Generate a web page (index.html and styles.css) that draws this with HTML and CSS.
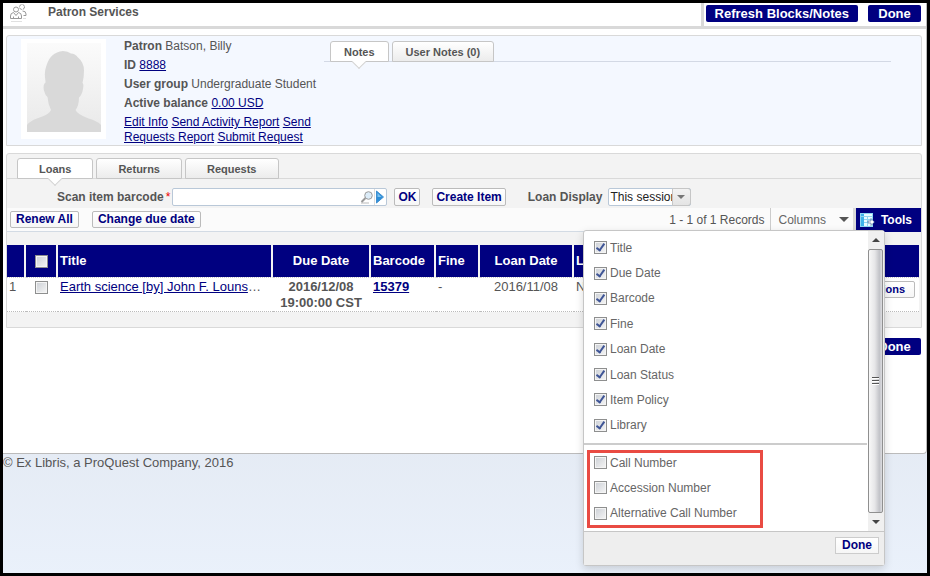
FILE: index.html
```html
<!DOCTYPE html>
<html lang="en">
<head>
    <meta charset="UTF-8">
    <meta name="viewport" content="width=device-width, initial-scale=1.0">
    <title>Patron Services</title>
    <link rel="stylesheet" href="styles.css">
</head>
<body>
    <main class="page">
        <header class="page-header">
            <svg class="header-icon" width="20" height="20" viewBox="0 0 20 20" fill="none" stroke="#999">
                <circle cx="13" cy="4" r="2.500" stroke-dasharray="3 1"/>
                <path d="M13.500 8q3.500 0 3.500 3v1.500h-2.500"/>
                <circle cx="7" cy="6.500" r="2.500" fill="#fff"/>
                <path fill="#fff" d="M1.500 15.500v-2.500q0-3 3-3.500l2.500 3 2.500-3q3 .5 3 3.500v2.500z"/>
                <path d="M4.500 15.500v-2M9.500 15.500v-2"/>
                <path d="M2 18.500h11M14 15.500h3" stroke="#e0e0e0"/>
            </svg>
            <h1>Patron Services</h1>
            <div class="header-actions">
                <button type="button" class="btn-primary">Refresh Blocks/Notes</button>
                <button type="button" class="btn-primary">Done</button>
            </div>
        </header>

        <section class="panel patron">
            <svg class="avatar" width="85" height="100" viewBox="0 0 85 100">
                <defs>
                    <linearGradient id="photo" x1="0" y1="0" x2="0" y2="1">
                        <stop offset="0" stop-color="#fbfbfb"/>
                        <stop offset="1" stop-color="#e9e9e9"/>
                    </linearGradient>
                </defs>
                <rect width="85" height="100" fill="#fff"/>
                <rect x="6" y="4" width="74" height="89" fill="url(#photo)"/>
                <path fill="#d9d9d9" d="M6 93v-7q3-4 10-6.500 13-4 14-8.500-3-6-3.500-13-2-1-3-5-2-5 0-8.500 1.500-1 1-2Q23 34 25 28q4-15 17-16 5 0 8 2.500 4 0 7 4 6 5 6 13 0 7-1.500 12.500 1.500 1 .5 6-1 6-4 8.500 0 8-3.500 12.500 2 4.500 13 8.500 9 2.500 12.500 6.500v7z"/>
            </svg>
            <div class="patron-info">
                <p><b>Patron</b> Batson, Billy</p>
                <p><b>ID</b> <a href="#">8888</a></p>
                <p><b>User group</b> Undergraduate Student</p>
                <p><b>Active balance</b> <a href="#">0.00 USD</a></p>
                <nav class="patron-links">
                    <a href="#">Edit Info</a> <a href="#">Send Activity Report</a> <a href="#">Send Requests Report</a> <a href="#">Submit Request</a>
                </nav>
            </div>
            <div class="tabs notes-tabs">
                <button type="button" class="tab active">Notes</button>
                <button type="button" class="tab">User Notes (0)</button>
            </div>
        </section>

        <section class="panel loans">
            <div class="tabs">
                <button type="button" class="tab wide active">Loans</button>
                <button type="button" class="tab wide">Returns</button>
                <button type="button" class="tab wide">Requests</button>
            </div>

            <form class="scan-row">
                <label for="barcode">Scan item barcode<span class="required">*</span></label>
                <div class="lookup">
                    <input type="text" id="barcode">
                    <button type="button" aria-label="Search">
                        <svg width="14" height="14" viewBox="0 0 14 14">
                            <path d="M1 13h8" stroke="#dcdcdc" stroke-width="2"/>
                            <path d="M1.500 12l4-4" stroke="#999" stroke-width="2"/>
                            <circle cx="8.500" cy="5.500" r="3.800" fill="#dcecf8" stroke="#9a9a9a"/>
                        </svg>
                    </button>
                    <button type="button" class="go" aria-label="Browse">
                        <svg width="8" height="14" viewBox="0 0 8 14">
                            <path d="M.5 1v12l7-6z" fill="#2f8fd8" stroke="#3f8fd0"/>
                            <path d="M1.500 3v4h4z" fill="#7cc3f2"/>
                        </svg>
                    </button>
                </div>
                <button type="button" class="btn ok">OK</button>
                <button type="button" class="btn create">Create Item</button>
                <label for="display">Loan Display</label>
                <div class="select">
                    <select id="display"><option>This session</option><option>All</option></select>
                    <span class="select-arrow"></span>
                </div>
            </form>

            <div class="toolbar">
                <button type="button" class="btn">Renew All</button>
                <button type="button" class="btn">Change due date</button>
                <span class="records">1 - 1 of 1 Records</span>
                <button type="button" class="columns-btn">Columns<span class="caret"></span></button>
                <button type="button" class="tools-btn">
                    <svg width="15" height="15" viewBox="0 0 15 15">
                        <rect x=".5" y=".5" width="12" height="13" fill="#eafcff" stroke="#8fd8f4"/>
                        <rect x="1" y="1" width="3" height="12" fill="#3fb4ea"/>
                        <path d="M1 3.500h11M4 6.500h8M4 9.500h8M7.500 3v10" stroke="#8fd4f0"/>
                        <path d="M8 8h3V5.500l3.500 3.500-3.500 3.500V10H8z" fill="#fff" stroke="#123c80" stroke-width=".5"/>
                    </svg>
                    Tools
                </button>

                <div class="columns-menu">
                    <div class="menu-body">
                        <div class="menu-lists">
                            <ul class="menu-list">
                                <li><label><input type="checkbox" checked>Title</label></li>
                                <li><label><input type="checkbox" checked>Due Date</label></li>
                                <li><label><input type="checkbox" checked>Barcode</label></li>
                                <li><label><input type="checkbox" checked>Fine</label></li>
                                <li><label><input type="checkbox" checked>Loan Date</label></li>
                                <li><label><input type="checkbox" checked>Loan Status</label></li>
                                <li><label><input type="checkbox" checked>Item Policy</label></li>
                                <li><label><input type="checkbox" checked>Library</label></li>
                            </ul>
                            <ul class="menu-list extra">
                                <li><label><input type="checkbox">Call Number</label></li>
                                <li><label><input type="checkbox">Accession Number</label></li>
                                <li><label><input type="checkbox">Alternative Call Number</label></li>
                            </ul>
                        </div>
                        <div class="scrollbar">
                            <span class="scroll-up"></span>
                            <div class="scroll-thumb"><i></i><i></i><i></i></div>
                            <span class="scroll-down"></span>
                        </div>
                    </div>
                    <div class="menu-footer">
                        <button type="button" class="btn menu-done">Done</button>
                    </div>
                </div>
            </div>

            <table class="loan-table">
                <colgroup>
                    <col class="c-num"><col class="c-check"><col class="c-title"><col class="c-due">
                    <col class="c-barcode"><col class="c-fine"><col class="c-date"><col><col class="c-actions">
                </colgroup>
                <thead>
                    <tr>
                        <th></th>
                        <th><input type="checkbox" aria-label="Select all"></th>
                        <th class="left">Title</th>
                        <th>Due Date</th>
                        <th class="left">Barcode</th>
                        <th class="left">Fine</th>
                        <th>Loan Date</th>
                        <th class="left">Loan Status</th>
                        <th></th>
                    </tr>
                </thead>
                <tbody>
                    <tr>
                        <td>1</td>
                        <td class="center"><input type="checkbox" aria-label="Select loan 1"></td>
                        <td><a href="#">Earth science [by] John F. Louns</a>…</td>
                        <td class="center"><b>2016/12/08 19:00:00 CST</b></td>
                        <td><b><a href="#">15379</a></b></td>
                        <td>-</td>
                        <td class="center">2016/11/08</td>
                        <td>Normal</td>
                        <td class="right"><button type="button" class="btn actions">Actions</button></td>
                    </tr>
                </tbody>
            </table>
        </section>

        <div class="bottom-actions">
            <button type="button" class="btn-primary">Done</button>
        </div>
    </main>
    <footer>© Ex Libris, a ProQuest Company, 2016</footer>
</body>
</html>
```

FILE: styles.css
```css
*, *::before, *::after {
    margin: 0;
    padding: 0;
    box-sizing: border-box;
}

body {
    font-family: "Liberation Sans", Arial, sans-serif;
    font-size: 12px;
    color: #555;
    min-height: 100vh;
    border: 3px solid #000;
    background: linear-gradient(#e3e9f2 70%, #eaf1fb);
}

button, input, select {
    font-family: inherit;
    font-size: 12px;
}

a {
    color: #000080;
}

.page {
    background-color: #fff;
    border-right: 1px solid #bbb;
    border-bottom: 1px solid #bbb;
    border-radius: 0 0 4px 0;
    padding-bottom: 98px;
}

/* Header */
.page-header {
    display: flex;
    align-items: stretch;
    height: 26px;
    border-bottom: 3px solid #d9d9d9;
}

.header-icon {
    margin-left: 6px;
}

h1 {
    flex: 1;
    font-size: 12px;
    line-height: 18px;
    margin-left: 19px;
}

.header-actions {
    display: flex;
    gap: 10px;
    padding: 2px 5px 4px 2px;
    border-left: 3px solid #d9d9d9;
}

.btn-primary {
    background-color: #000080;
    color: #fff;
    border: none;
    border-radius: 2px;
    font-size: 13px;
    font-weight: bold;
    line-height: 17px;
    min-width: 53px;
    padding: 0 9px;
}

.btn {
    background: linear-gradient(#fff, #f6f6f6);
    color: #000080;
    border: 1px solid #bbb;
    border-radius: 2px;
    font-weight: bold;
    line-height: 15px;
    padding: 0 5px;
    white-space: nowrap;
}

.panel {
    margin: 6px 4px 0 3px;
    border: 1px solid #d9d9d9;
    border-radius: 3px 3px 0 0;
}

/* Patron details */
.patron {
    display: flex;
    align-items: flex-start;
    height: 111px;
    background-color: #f4f8ff;
}

.avatar {
    margin: 3px 18px 0 14px;
}

.patron-info {
    width: 200px;
    padding-top: 1px;
    line-height: 19px;
}

.patron-links {
    margin-top: 2px;
    line-height: 15px;
}

/* Tabs */
.tabs {
    display: flex;
    gap: 3px;
    padding: 4px 10px 0;
    border-bottom: 1px solid #d9d9d9;
}

.notes-tabs {
    flex: 1;
    margin: 1px 30px 0 0;
    padding: 4px 6px 0;
    border-color: #d3d9e5;
}

.tab {
    position: relative;
    z-index: 0;
    height: 21px;
    margin-bottom: -1px;
    padding: 0 13px;
    border: 1px solid #c6c6c6;
    border-radius: 3px 3px 0 0;
    background: linear-gradient(#fff, #ececec);
    color: #555;
    font-size: 11px;
    font-weight: bold;
}

.tab.wide {
    padding: 0 21px;
}

.tab.active {
    background: #fff;
}

.tab.active::after {
    content: "";
    position: absolute;
    z-index: -1;
    left: 50%;
    bottom: -6px;
    width: 10px;
    height: 10px;
    margin-left: -5px;
    background-color: #fff;
    border: solid #d3d3d3;
    border-width: 0 1px 1px 0;
    transform: rotate(45deg);
}

/* Loans */
.loans {
    margin-top: 7px;
    background-color: #f3f3f3;
    padding-bottom: 15px;
}

.scan-row {
    display: flex;
    align-items: center;
    height: 29px;
    padding: 7px 0 0 50px;
}

.scan-row label {
    font-weight: bold;
}

.required {
    color: #e00;
    font-weight: normal;
    margin: 0 2px;
}

.lookup {
    display: flex;
    width: 215px;
    height: 18px;
    background-color: #fff;
    border: 1px solid #b9c8d8;
    border-radius: 2px;
}

.lookup input {
    flex: 1;
    min-width: 0;
    border: none;
    padding: 0 4px;
    background: none;
}

.lookup button {
    display: flex;
    align-items: center;
    border: none;
    background: none;
}

.lookup .go {
    border-left: 1px solid #ddd;
    padding: 0 2px 0 1px;
}

.scan-row .btn {
    line-height: 16px;
    padding: 0 3px;
}

.ok {
    margin-left: 7px;
}

.create {
    margin: 0 22px 0 12px;
}

.select {
    position: relative;
    width: 83px;
    height: 18px;
    margin-left: 6px;
}

.select select {
    appearance: none;
    width: 100%;
    height: 18px;
    padding: 0 18px 0 1px;
    border: 1px solid #b9c8d8;
    border-radius: 2px;
    background-color: #fff;
    color: #222;
    text-overflow: clip;
}

.select-arrow {
    position: absolute;
    top: 0;
    right: 0;
    width: 19px;
    height: 18px;
    border: 1px solid #c6c6c6;
    border-radius: 0 3px 3px 0;
    background: linear-gradient(#f3f3f3, #e4e4e4);
    pointer-events: none;
}

.select-arrow::after {
    content: "";
    position: absolute;
    top: 6px;
    left: 4px;
    border: 4px solid transparent;
    border-top-color: #777;
    border-bottom: none;
}

.toolbar {
    position: relative;
    display: flex;
    align-items: center;
    height: 24px;
    padding-left: 3px;
    border-bottom: 1px solid #d3dbe4;
    background-color: #fbfbfb;
}

.toolbar > .btn {
    margin-right: 13px;
}

.records {
    margin-left: auto;
    padding-right: 5px;
}

.columns-btn {
    display: flex;
    align-items: center;
    align-self: stretch;
    gap: 13px;
    padding: 0 4px 0 8px;
    border: none;
    border-left: 1px solid #ccc;
    border-right: 3px solid #d9d9d9;
    background: none;
    color: #666;
}

.caret {
    border: 5px solid transparent;
    border-top-color: #555;
    border-bottom: none;
}

.tools-btn {
    display: flex;
    align-items: center;
    align-self: stretch;
    gap: 6px;
    margin-bottom: -1px;
    padding: 0 9px 0 4px;
    border: none;
    background-color: #000080;
    color: #fff;
    font-weight: bold;
}

/* Columns menu */
.columns-menu {
    position: absolute;
    top: 22px;
    right: 36px;
    z-index: 2;
    width: 302px;
    border: 1px solid #c6c6c6;
    border-radius: 3px;
    background-color: #fff;
    color: #666;
    box-shadow: 0 3px 8px rgba(0, 0, 0, 0.15);
}

.menu-body {
    display: flex;
    height: 300px;
}

.menu-lists {
    flex: 1;
    padding-top: 4px;
}

.menu-list {
    display: grid;
    grid-auto-rows: 1fr;
    height: 203px;
    list-style: none;
}

.menu-list label {
    display: flex;
    align-items: center;
    gap: 3px;
    height: 100%;
    padding-left: 10px;
}

.menu-list.extra {
    position: relative;
    height: 76px;
    margin-top: 12px;
}

.menu-list.extra::before {
    content: "";
    position: absolute;
    top: -7px;
    left: 0;
    right: 1px;
    height: 2px;
    background-color: #ccc;
}

.menu-list.extra::after {
    content: "";
    position: absolute;
    top: 0;
    left: 3px;
    width: 176px;
    height: 78px;
    border: 3px solid #e94b43;
    pointer-events: none;
}

input[type="checkbox"] {
    appearance: none;
    flex: none;
    width: 13px;
    height: 13px;
    border: 1px solid #8e8f8f;
    background: linear-gradient(135deg, #cbcfd5, #f6f6f6);
    box-shadow: inset 0 0 0 1px #f4f4f4;
    vertical-align: top;
}

input[type="checkbox"]:checked::after {
    content: "";
    display: block;
    width: 5px;
    height: 9px;
    margin-left: 3px;
    border: solid #3f5596;
    border-width: 0 2px 2px 0;
    transform: rotate(35deg);
}

.scrollbar {
    display: flex;
    flex-direction: column;
    width: 16px;
    padding-right: 1px;
    background-color: #f0f0f0;
}

.scroll-up, .scroll-down {
    display: flex;
    align-items: center;
    justify-content: center;
    height: 18px;
}

.scroll-up::after, .scroll-down::after {
    content: "";
    border: 4px solid transparent;
    border-bottom-color: #444;
    border-top: none;
}

.scroll-down::after {
    transform: rotate(180deg);
}

.scroll-thumb {
    flex: 1;
    display: flex;
    flex-direction: column;
    align-items: center;
    justify-content: center;
    gap: 1px;
    border: 1px solid #8f8f8f;
    border-radius: 2px;
    background: linear-gradient(90deg, #f8f8f8, #e6e6e8 45%, #c2c3c8 80%, #dcdce0);
}

.scroll-thumb i {
    width: 7px;
    height: 2px;
    border-bottom: 1px solid #fff;
    background-color: #555;
}

.menu-footer {
    display: flex;
    justify-content: flex-end;
    align-items: flex-start;
    height: 34px;
    padding: 5px 5px 0;
    border-top: 1px solid #c6c6c6;
    background-color: #eee;
}

.menu-done {
    border-color: #ccc;
    border-radius: 0;
    padding: 0 6px;
}

/* Loan list */
.loan-table {
    width: 100%;
    margin-top: 13px;
    table-layout: fixed;
    border-collapse: separate;
    border-spacing: 0;
    border-right: 2px solid #f3f3f3;
    font-size: 13px;
    line-height: 16px;
    background-color: #fff;
}

.c-num { width: 19px; }
.c-check { width: 32px; }
.c-title { width: 215px; }
.c-due { width: 98px; }
.c-barcode { width: 65px; }
.c-fine { width: 44px; }
.c-date { width: 94px; }
.c-actions { width: 100px; }

.loan-table th {
    height: 33px;
    padding: 0 2px;
    background-color: #000080;
    background-clip: padding-box;
    color: #fff;
    border-right: 2px solid #f3f3f3;
    border-bottom: 1px dotted #ccc;
    white-space: nowrap;
}

.loan-table th:nth-last-child(-n+2) {
    border-right: none;
}

.loan-table td {
    height: 34px;
    padding: 1px 2px 0;
    border-bottom: 1px dotted #bbb;
    vertical-align: top;
}

.loan-table th input {
    vertical-align: middle;
}

.loan-table td input {
    margin-top: 2px;
}

.loan-table .left {
    text-align: left;
}

.loan-table .center {
    text-align: center;
    padding-right: 4px;
}

.loan-table .right {
    text-align: right;
    padding: 3px 4px 0 0;
}

.actions {
    font-size: 11px;
    padding: 0 9px;
    vertical-align: top;
}

.bottom-actions {
    display: flex;
    justify-content: flex-end;
    padding: 10px 5px 0;
}

footer {
    font-size: 13px;
    line-height: 17px;
}
```
